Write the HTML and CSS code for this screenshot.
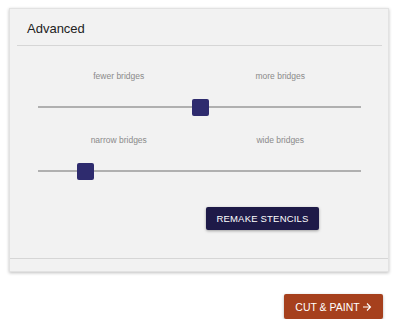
FILE: index.html
```html
<!DOCTYPE html>
<html>
<head>
<meta charset="utf-8">
<link rel="stylesheet" href="styles.css">
</head>
<body>
<div class="card">
  <div class="card-header">Advanced</div>
  <div class="divider"></div>
  <div class="card-body">
    <div class="slider-group">
      <div class="labels"><span>fewer bridges</span><span>more bridges</span></div>
      <div class="slider"><div class="track"></div><div class="thumb" style="left: 50%"></div></div>
    </div>
    <div class="slider-group second">
      <div class="labels"><span>narrow bridges</span><span>wide bridges</span></div>
      <div class="slider"><div class="track"></div><div class="thumb" style="left: 14.5%"></div></div>
    </div>
    <div class="actions">
      <button class="btn-remake">REMAKE STENCILS</button>
    </div>
  </div>
  <div class="divider bottom"></div>
  <div class="card-footer"></div>
</div>
<div class="page-actions">
  <button class="btn-cut">CUT &amp; PAINT <svg width="10" height="10" viewBox="0 0 10 10"><path d="M1 5h7.5M5 1.5L8.5 5L5 8.5" fill="none" stroke="#fff" stroke-width="1.1"/></svg></button>
</div>
</body>
</html>
```

FILE: styles.css
```css
html, body {
  margin: 0;
  padding: 0;
  background: #ffffff;
  font-family: "Liberation Sans", Arial, sans-serif;
}
.card {
  margin: 8px 0 0 9px;
  width: 380px;
  height: 264px;
  box-sizing: border-box;
  background: #f2f2f2;
  border: 1px solid #e2e2e2;
  box-shadow: 0 1px 3px rgba(0,0,0,0.25);
  display: flex;
  flex-direction: column;
}
.card-header {
  height: 36px;
  box-sizing: border-box;
  padding: 12px 0 0 17px;
  font-size: 13px;
  color: #222;
}
.divider {
  height: 1px;
  background: #d6d6d6;
  margin: 0 6px 0 7px;
}
.divider.bottom {
  margin: 0;
}
.card-body {
  height: 212px;
  box-sizing: border-box;
  padding: 25px 27px 0 28px;
  display: flex;
  flex-direction: column;
}
.slider-group {
  display: flex;
  flex-direction: column;
}
.slider-group.second {
  margin-top: 20px;
}
.labels {
  display: flex;
  font-size: 8.5px;
  color: #8a8a8a;
}
.labels span {
  flex: 1;
  text-align: center;
}
.slider {
  position: relative;
  height: 16px;
  margin-top: 18px;
}
.track {
  position: absolute;
  left: 0;
  right: 0;
  top: 7px;
  height: 2px;
  background: #b0b0b0;
}
.thumb {
  position: absolute;
  top: 0;
  width: 17px;
  height: 17px;
  margin-left: -8px;
  background: #2e2b6e;
  border-radius: 2px;
}
.actions {
  display: flex;
  justify-content: flex-end;
  margin-top: 28px;
  padding-right: 42px;
}
.btn-remake {
  width: 113px;
  height: 23px;
  border: none;
  border-radius: 2px;
  background: #1e1a48;
  color: #fff;
  font-family: "Liberation Sans", Arial, sans-serif;
  font-size: 9.5px;
  letter-spacing: 0.2px;
  box-shadow: 0 1px 3px rgba(0,0,0,0.35);
  padding: 0;
}
.card-footer {
  flex: 1;
}
.page-actions {
  display: flex;
  justify-content: flex-end;
  padding: 22px 17px 0 0;
}
.btn-cut {
  width: 99px;
  height: 25px;
  border: none;
  border-radius: 2px;
  background: #a6401d;
  color: #fff;
  font-family: "Liberation Sans", Arial, sans-serif;
  font-size: 10.5px;
  box-shadow: 0 1px 3px rgba(0,0,0,0.3);
  display: flex;
  align-items: center;
  justify-content: center;
  gap: 2px;
  padding: 0;
}
```
